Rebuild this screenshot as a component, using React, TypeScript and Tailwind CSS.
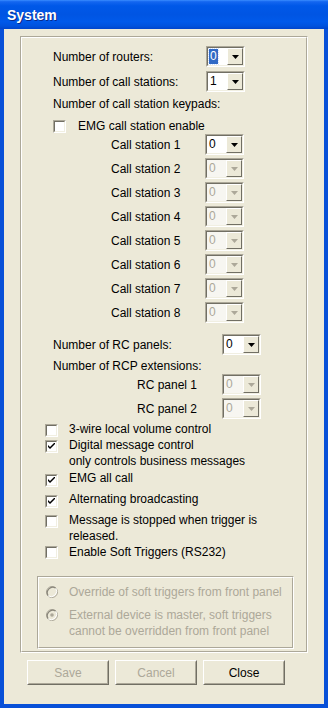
import React from "react";

const FONT = { fontFamily: '"Liberation Sans", Arial, sans-serif' };

function Arrow({ disabled }: { disabled?: boolean }) {
  return (
    <svg width="7" height="4" viewBox="0 0 7 4" className="block">
      <path d="M0 0H7L3.5 4Z" fill={disabled ? "#ACA899" : "#000"} />
    </svg>
  );
}

function Combo({ value, disabled, selected }: { value: string; disabled?: boolean; selected?: boolean }) {
  return (
    <div className="w-[39px] h-[21px] shrink-0 border border-t-[#ACA899] border-l-[#ACA899] border-b-white border-r-white">
      <div className="w-full h-full flex border border-t-[#716F64] border-l-[#716F64] border-b-[#F1EFE2] border-r-[#F1EFE2]">
        <div className={`flex-1 flex items-center pl-[1px] ${disabled ? "bg-[#F7F6F1]" : "bg-white"}`}>
          {selected ? (
            <span className="h-[15px] px-[1px] flex items-center bg-[#316AC5] text-white text-[12px] leading-[15px] outline outline-1 outline-dotted outline-[#CFE0FF]">
              {value}
            </span>
          ) : (
            <span className={`text-[12px] leading-[15px] px-[1px] ${disabled ? "text-[#ACA899]" : "text-black"}`}>{value}</span>
          )}
        </div>
        <div className="w-[16px] h-full bg-[#ECE9D8] border border-t-white border-l-white border-b-[#716F64] border-r-[#716F64] flex items-center justify-center">
          <Arrow disabled={disabled} />
        </div>
      </div>
    </div>
  );
}

function Check({ checked }: { checked?: boolean }) {
  return (
    <div className="w-[13px] h-[13px] shrink-0 border border-t-[#ACA899] border-l-[#ACA899] border-b-white border-r-white">
      <div className="w-full h-full bg-white border border-t-[#716F64] border-l-[#716F64] border-b-[#F1EFE2] border-r-[#F1EFE2] flex items-center justify-center">
        {checked && (
          <svg width="7" height="7" viewBox="0 0 7 7" className="block">
            <path d="M0 2 L0 4 L2 6 L7 1 L7 -1 L2 4 Z" fill="#000" />
          </svg>
        )}
      </div>
    </div>
  );
}

function Radio({ dot }: { dot?: boolean }) {
  return (
    <svg width="12" height="12" viewBox="0 0 12 12" className="block shrink-0">
      <circle cx="6" cy="6" r="5.5" fill="#ECE9D8" stroke="#ACA899" />
      <path d="M2.2 9.8 A5.5 5.5 0 0 1 9.8 2.2" fill="none" stroke="#8A877B" strokeWidth="1.2" />
      <path d="M9.8 2.2 A5.5 5.5 0 0 1 2.2 9.8" fill="none" stroke="#FFFFFF" strokeWidth="1" />
      {dot && <circle cx="6" cy="6" r="1.8" fill="#ACA899" />}
    </svg>
  );
}

function Etched({ className, children }: { className?: string; children?: React.ReactNode }) {
  return (
    <div className={`border border-t-[#ACA899] border-l-[#ACA899] border-b-white border-r-white ${className ?? ""}`}>
      <div className="w-full h-full border border-t-white border-l-white border-b-[#ACA899] border-r-[#ACA899] flex flex-col">
        {children}
      </div>
    </div>
  );
}

function Btn({ label, disabled }: { label: string; disabled?: boolean }) {
  return (
    <div className="w-[82px] h-[25px] border border-t-white border-l-white border-b-[#716F64] border-r-[#716F64] bg-[#ECE9D8]">
      <div className="w-full h-full border border-t-transparent border-l-transparent border-b-[#ACA899] border-r-[#ACA899] flex items-center justify-center">
        <span className={`text-[12px] ${disabled ? "text-[#ACA899]" : "text-black"}`}>{label}</span>
      </div>
    </div>
  );
}

export default function App() {
  const cs = [1, 2, 3, 4, 5, 6, 7, 8];
  return (
    <div className="w-[328px] h-[708px] flex flex-col overflow-hidden select-none" style={FONT}>
      {/* Title bar */}
      <div className="h-[29px] shrink-0 flex items-center pl-[7px] pt-[1px] bg-[linear-gradient(to_bottom,#3A8DFF_0%,#1466F0_6%,#0058E8_20%,#0055E3_50%,#0059EA_75%,#0052DD_90%,#0044CC_100%)]">
        <span className="text-white font-bold text-[14px] [text-shadow:1px_1px_0_#0A2A8A]">System</span>
      </div>
      {/* Body */}
      <div className="flex-1 flex flex-col bg-[#ECE9D8] border-l-4 border-r-4 border-b-4 border-l-[#0850D8] border-r-[#0850D8] border-b-[#0850D8] px-4 text-[12px] text-black">
        <Etched className="mt-[7px] h-[617px]">
          <div className="mt-[8px] h-[21px] flex items-center pl-[31px]">
            <span className="w-[153px]">Number of routers:</span>
            <Combo value="0" selected />
          </div>
          <div className="mt-[4px] h-[21px] flex items-center pl-[31px]">
            <span className="w-[153px]">Number of call stations:</span>
            <Combo value="1" />
          </div>
          <div className="mt-[4px] h-[16px] leading-[16px] pl-[31px]">Number of call station keypads:</div>
          <div className="mt-[6px] h-[16px] flex items-center pl-[31px]">
            <Check />
            <span className="ml-[12px] leading-[16px]">EMG call station enable</span>
          </div>
          {cs.map((n, i) => (
            <div key={n} className={`${i === 0 ? "mt-0" : "mt-[3px]"} h-[21px] flex items-center pl-[89px]`}>
              <span className="w-[94px]">Call station {n}</span>
              <Combo value="0" disabled={n !== 1} />
            </div>
          ))}
          <div className="mt-[11px] h-[21px] flex items-center pl-[31px]">
            <span className="w-[169px]">Number of RC panels:</span>
            <Combo value="0" />
          </div>
          <div className="mt-[3px] h-[16px] leading-[16px] pl-[31px]">Number of RCP extensions:</div>
          <div className="mt-0 h-[21px] flex items-center pl-[115px]">
            <span className="w-[85px]">RC panel 1</span>
            <Combo value="0" disabled />
          </div>
          <div className="mt-[3px] h-[21px] flex items-center pl-[115px]">
            <span className="w-[85px]">RC panel 2</span>
            <Combo value="0" disabled />
          </div>
          <div className="mt-[3px] flex items-start pl-[23px] leading-[15px]">
            <div className="mt-[2px]"><Check /></div>
            <span className="ml-[11px]">3-wire local volume control</span>
          </div>
          <div className="mt-0 flex items-start pl-[23px] leading-[16px]">
            <div className="mt-[3px]"><Check checked /></div>
            <span className="ml-[11px]">Digital message control<br />only controls business messages</span>
          </div>
          <div className="mt-[1px] flex items-start pl-[23px] leading-[16px]">
            <div className="mt-[4px]"><Check checked /></div>
            <span className="ml-[11px]">EMG all call</span>
          </div>
          <div className="mt-[4px] flex items-start pl-[23px] leading-[16px]">
            <div className="mt-[4px]"><Check checked /></div>
            <span className="ml-[11px]">Alternating broadcasting</span>
          </div>
          <div className="mt-[4px] flex items-start pl-[23px] leading-[16px]">
            <div className="mt-[3px]"><Check /></div>
            <span className="ml-[11px]">Message is stopped when trigger is<br />released.</span>
          </div>
          <div className="mt-0 flex items-start pl-[23px] leading-[16px]">
            <div className="mt-[2px]"><Check /></div>
            <span className="ml-[11px]">Enable Soft Triggers (RS232)</span>
          </div>
          <Etched className="mt-[16px] ml-[15px] w-[257px] h-[73px]">
            <div className="mt-[6px] flex items-start pl-[7px] leading-[16px] text-[#ACA899]">
              <div className="mt-[2px]"><Radio /></div>
              <span className="ml-[11px]">Override of soft triggers from front panel</span>
            </div>
            <div className="mt-[7px] flex items-start pl-[7px] leading-[16px] text-[#ACA899]">
              <div className="mt-[2px]"><Radio dot /></div>
              <span className="ml-[11px]">External device is master, soft triggers<br />cannot be overridden from front panel</span>
            </div>
          </Etched>
        </Etched>
        <div className="mt-[7px] flex gap-[6px] pl-[7px]">
          <Btn label="Save" disabled />
          <Btn label="Cancel" disabled />
          <Btn label="Close" />
        </div>
      </div>
    </div>
  );
}
